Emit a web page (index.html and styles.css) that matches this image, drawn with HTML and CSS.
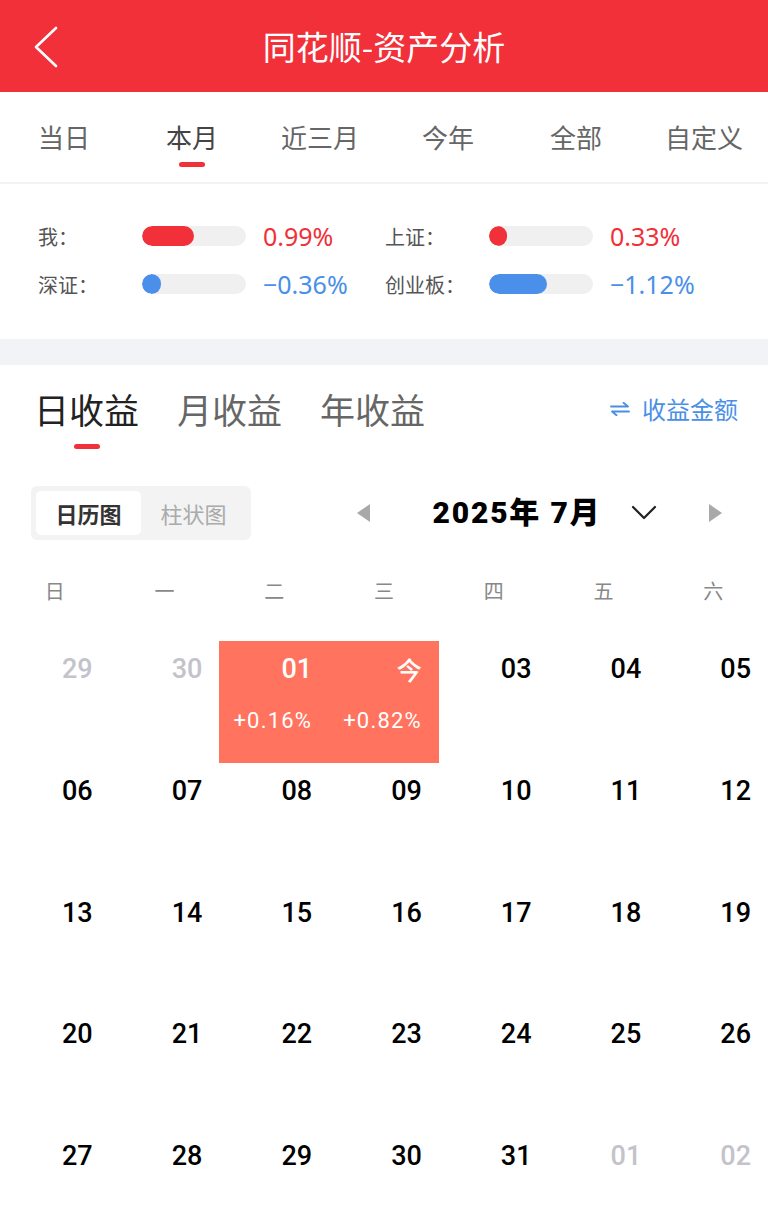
FILE: index.html
```html
<!DOCTYPE html>
<html lang="zh-CN">

<head>
  <meta charset="UTF-8">
  <meta name="viewport" content="width=device-width, initial-scale=1.0">
  <title>同花顺-资产分析</title>
  <link rel="stylesheet" href="styles.css">
</head>

<body>
  <div class="header">
    <div class="back">
      <svg width="26" height="44" viewBox="0 0 26 44">
        <polyline points="22,2 2,21 22,40" fill="none" stroke="#fff" stroke-width="2.6" stroke-linecap="round" stroke-linejoin="round" />
      </svg>
    </div>
    <div class="header-title">同花顺-资产分析</div>
    <div></div>
  </div>

  <div class="periods">
    <div class="period">当日</div>
    <div class="period active">本月</div>
    <div class="period">近三月</div>
    <div class="period">今年</div>
    <div class="period">全部</div>
    <div class="period">自定义</div>
  </div>

  <div class="compare">
    <div class="compare-item">
      <div class="compare-label">我：</div>
      <div class="bar"><div class="bar-fill up" style="width: 50%;"></div></div>
      <div class="compare-value up">0.99%</div>
    </div>
    <div class="compare-item">
      <div class="compare-label">上证：</div>
      <div class="bar"><div class="bar-fill up" style="width: 17%;"></div></div>
      <div class="compare-value up">0.33%</div>
    </div>
    <div class="compare-item">
      <div class="compare-label">深证：</div>
      <div class="bar"><div class="bar-fill down" style="width: 18%;"></div></div>
      <div class="compare-value down">−0.36%</div>
    </div>
    <div class="compare-item">
      <div class="compare-label">创业板：</div>
      <div class="bar"><div class="bar-fill down" style="width: 56%;"></div></div>
      <div class="compare-value down">−1.12%</div>
    </div>
  </div>

  <div class="section-gap"></div>

  <div class="returns">
    <div class="returns-tabs">
      <div class="returns-tab active">日收益</div>
      <div class="returns-tab">月收益</div>
      <div class="returns-tab">年收益</div>
      <div class="switch">
        <svg width="20" height="14" viewBox="0 0 20 14">
          <path d="M1 4.5H18L13.5 0.8M19 9.5H2L6.5 13.2" fill="none" stroke="#4a8fe6" stroke-width="1.8" stroke-linecap="round" stroke-linejoin="round" />
        </svg>
        <span>收益金额</span>
      </div>
    </div>

    <div class="toolbar">
      <div class="view-toggle">
        <div class="view-option active">日历图</div>
        <div class="view-option">柱状图</div>
      </div>
      <div class="month-nav">
        <svg class="nav-arrow" width="13" height="18" viewBox="0 0 13 18"><polygon points="13,0 0,9 13,18" fill="#a9a9a9" /></svg>
        <div class="month-title">2025年 7月</div>
        <svg class="month-drop" width="26" height="16" viewBox="0 0 26 16"><polyline points="2,2 13,13 24,2" fill="none" stroke="#222" stroke-width="2.2" stroke-linecap="round" stroke-linejoin="round" /></svg>
        <svg class="nav-arrow" width="13" height="18" viewBox="0 0 13 18"><polygon points="0,0 13,9 0,18" fill="#a9a9a9" /></svg>
      </div>
    </div>

    <div class="weekdays">
      <div>日</div><div>一</div><div>二</div><div>三</div><div>四</div><div>五</div><div>六</div>
    </div>

    <div class="calendar">
      <div class="day other"><div class="day-num">29</div></div>
      <div class="day other"><div class="day-num">30</div></div>
      <div class="day marked"><div class="day-num">01</div><div class="day-pct">+0.16%</div></div>
      <div class="day marked"><div class="day-num today">今</div><div class="day-pct">+0.82%</div></div>
      <div class="day"><div class="day-num">03</div></div>
      <div class="day"><div class="day-num">04</div></div>
      <div class="day"><div class="day-num">05</div></div>

      <div class="day"><div class="day-num">06</div></div>
      <div class="day"><div class="day-num">07</div></div>
      <div class="day"><div class="day-num">08</div></div>
      <div class="day"><div class="day-num">09</div></div>
      <div class="day"><div class="day-num">10</div></div>
      <div class="day"><div class="day-num">11</div></div>
      <div class="day"><div class="day-num">12</div></div>

      <div class="day"><div class="day-num">13</div></div>
      <div class="day"><div class="day-num">14</div></div>
      <div class="day"><div class="day-num">15</div></div>
      <div class="day"><div class="day-num">16</div></div>
      <div class="day"><div class="day-num">17</div></div>
      <div class="day"><div class="day-num">18</div></div>
      <div class="day"><div class="day-num">19</div></div>

      <div class="day"><div class="day-num">20</div></div>
      <div class="day"><div class="day-num">21</div></div>
      <div class="day"><div class="day-num">22</div></div>
      <div class="day"><div class="day-num">23</div></div>
      <div class="day"><div class="day-num">24</div></div>
      <div class="day"><div class="day-num">25</div></div>
      <div class="day"><div class="day-num">26</div></div>

      <div class="day"><div class="day-num">27</div></div>
      <div class="day"><div class="day-num">28</div></div>
      <div class="day"><div class="day-num">29</div></div>
      <div class="day"><div class="day-num">30</div></div>
      <div class="day"><div class="day-num">31</div></div>
      <div class="day other"><div class="day-num">01</div></div>
      <div class="day other"><div class="day-num">02</div></div>
    </div>
  </div>
</body>

</html>
```

FILE: styles.css
```css
body {
  margin: 0;
  padding: 0;
  background-color: #fff;
  font-family: Roboto, "Noto Sans CJK SC", sans-serif;
  color: #222;
  overflow: hidden;
}

.header {
  height: 92px;
  background-color: #f1303a;
  display: grid;
  grid-template-columns: 120px 1fr 120px;
  align-items: center;
}

.back {
  padding-left: 34px;
  padding-top: 4px;
  display: flex;
  align-items: center;
}

.header-title {
  text-align: center;
  color: #fff;
  font-size: 33px;
  font-family: "Noto Sans CJK SC", sans-serif;
}

.periods {
  display: flex;
  height: 90px;
  border-bottom: 2px solid #f2f2f4;
}

.period {
  flex: 1;
  text-align: center;
  font-size: 26px;
  color: #666;
  padding-top: 27px;
  line-height: 36px;
  font-family: "Noto Sans CJK SC", sans-serif;
}

.period.active {
  color: #444;
}

.period.active::after {
  content: "";
  display: block;
  width: 26px;
  height: 5px;
  border-radius: 3px;
  background-color: #f1303a;
  margin: 7px auto 0;
}

.compare {
  display: grid;
  grid-template-columns: 347px 1fr;
  grid-auto-rows: 28px;
  row-gap: 20px;
  padding: 38px 0 41px 38px;
}

.compare-item {
  display: flex;
  align-items: center;
  height: 28px;
}

.compare-label {
  width: 104px;
  font-size: 20px;
  color: #555;
  font-family: "Noto Sans CJK SC", sans-serif;
}

.bar {
  width: 104px;
  height: 20px;
  border-radius: 10px;
  background-color: #f0f0f0;
  overflow: hidden;
}

.bar-fill {
  height: 100%;
  border-radius: 10px;
  min-width: 18px;
}

.bar-fill.up {
  background-color: #f1303a;
}

.bar-fill.down {
  background-color: #4a8fe9;
}

.compare-value {
  margin-left: 17px;
  font-size: 25px;
  line-height: 28px;
  font-family: "Noto Sans", sans-serif;
}

.compare-value.up {
  color: #f1303a;
}

.compare-value.down {
  color: #4a8fe9;
}

.section-gap {
  height: 26px;
  background-color: #f2f3f6;
}

.returns-tabs {
  display: flex;
  align-items: flex-start;
  padding: 22px 30px 0 34px;
  height: 62px;
  gap: 38px;
}

.returns-tab {
  font-size: 35px;
  line-height: 44px;
  color: #666;
  font-family: "Noto Sans CJK SC", sans-serif;
}

.returns-tab.active {
  color: #222;
}

.returns-tab.active::after {
  content: "";
  display: block;
  width: 26px;
  height: 5px;
  border-radius: 3px;
  background-color: #f1303a;
  margin: 13px auto 0;
}

.switch {
  margin-left: auto;
  display: flex;
  align-items: center;
  gap: 12px;
  color: #4a8fe6;
  font-size: 24px;
  line-height: 44px;
  font-family: "Noto Sans CJK SC", sans-serif;
}

.toolbar {
  display: flex;
  align-items: center;
  padding: 37px 0 0 31px;
}

.view-toggle {
  display: flex;
  background-color: #f3f3f3;
  border-radius: 6px;
  padding: 5px;
  width: 210px;
}

.view-option {
  width: 105px;
  text-align: center;
  line-height: 44px;
  font-size: 22px;
  color: #aaa;
  border-radius: 5px;
  font-family: "Noto Sans CJK SC", sans-serif;
}

.view-option.active {
  background-color: #fff;
  color: #333;
  font-weight: bold;
}

.month-nav {
  display: flex;
  align-items: center;
  margin-left: 106px;
}

.month-title {
  margin-left: 61px;
  margin-top: -6px;
  font-size: 30px;
  font-weight: 900;
  color: #000;
  width: 172px;
  text-align: center;
  letter-spacing: 1.8px;
  white-space: nowrap;
}

.month-drop {
  margin-left: 28px;
  margin-right: 52px;
}

.weekdays {
  display: grid;
  grid-template-columns: repeat(7, 1fr);
  margin-top: 26px;
  line-height: 50px;
  font-size: 20px;
  color: #888;
  text-align: center;
  font-family: "Noto Sans CJK SC", sans-serif;
}

.calendar {
  display: grid;
  grid-template-columns: repeat(7, 1fr);
  grid-auto-rows: 121.8px;
  margin-top: 25px;
}

.day {
  text-align: right;
  padding: 12px 17px 0 0;
}

.day-num {
  font-size: 27px;
  line-height: 32px;
  font-weight: 500;
  color: #000;
}

.day.other .day-num {
  color: #c3c3cb;
}

.day.marked {
  background-color: #ff735f;
}

.day.marked .day-num {
  color: #fff;
}

.day-num.today {
  font-size: 25px;
  font-family: "Noto Sans CJK SC", sans-serif;
}

.day-pct {
  margin-top: 23px;
  font-size: 22px;
  line-height: 26px;
  letter-spacing: 1.2px;
  color: #fff;
}
```
